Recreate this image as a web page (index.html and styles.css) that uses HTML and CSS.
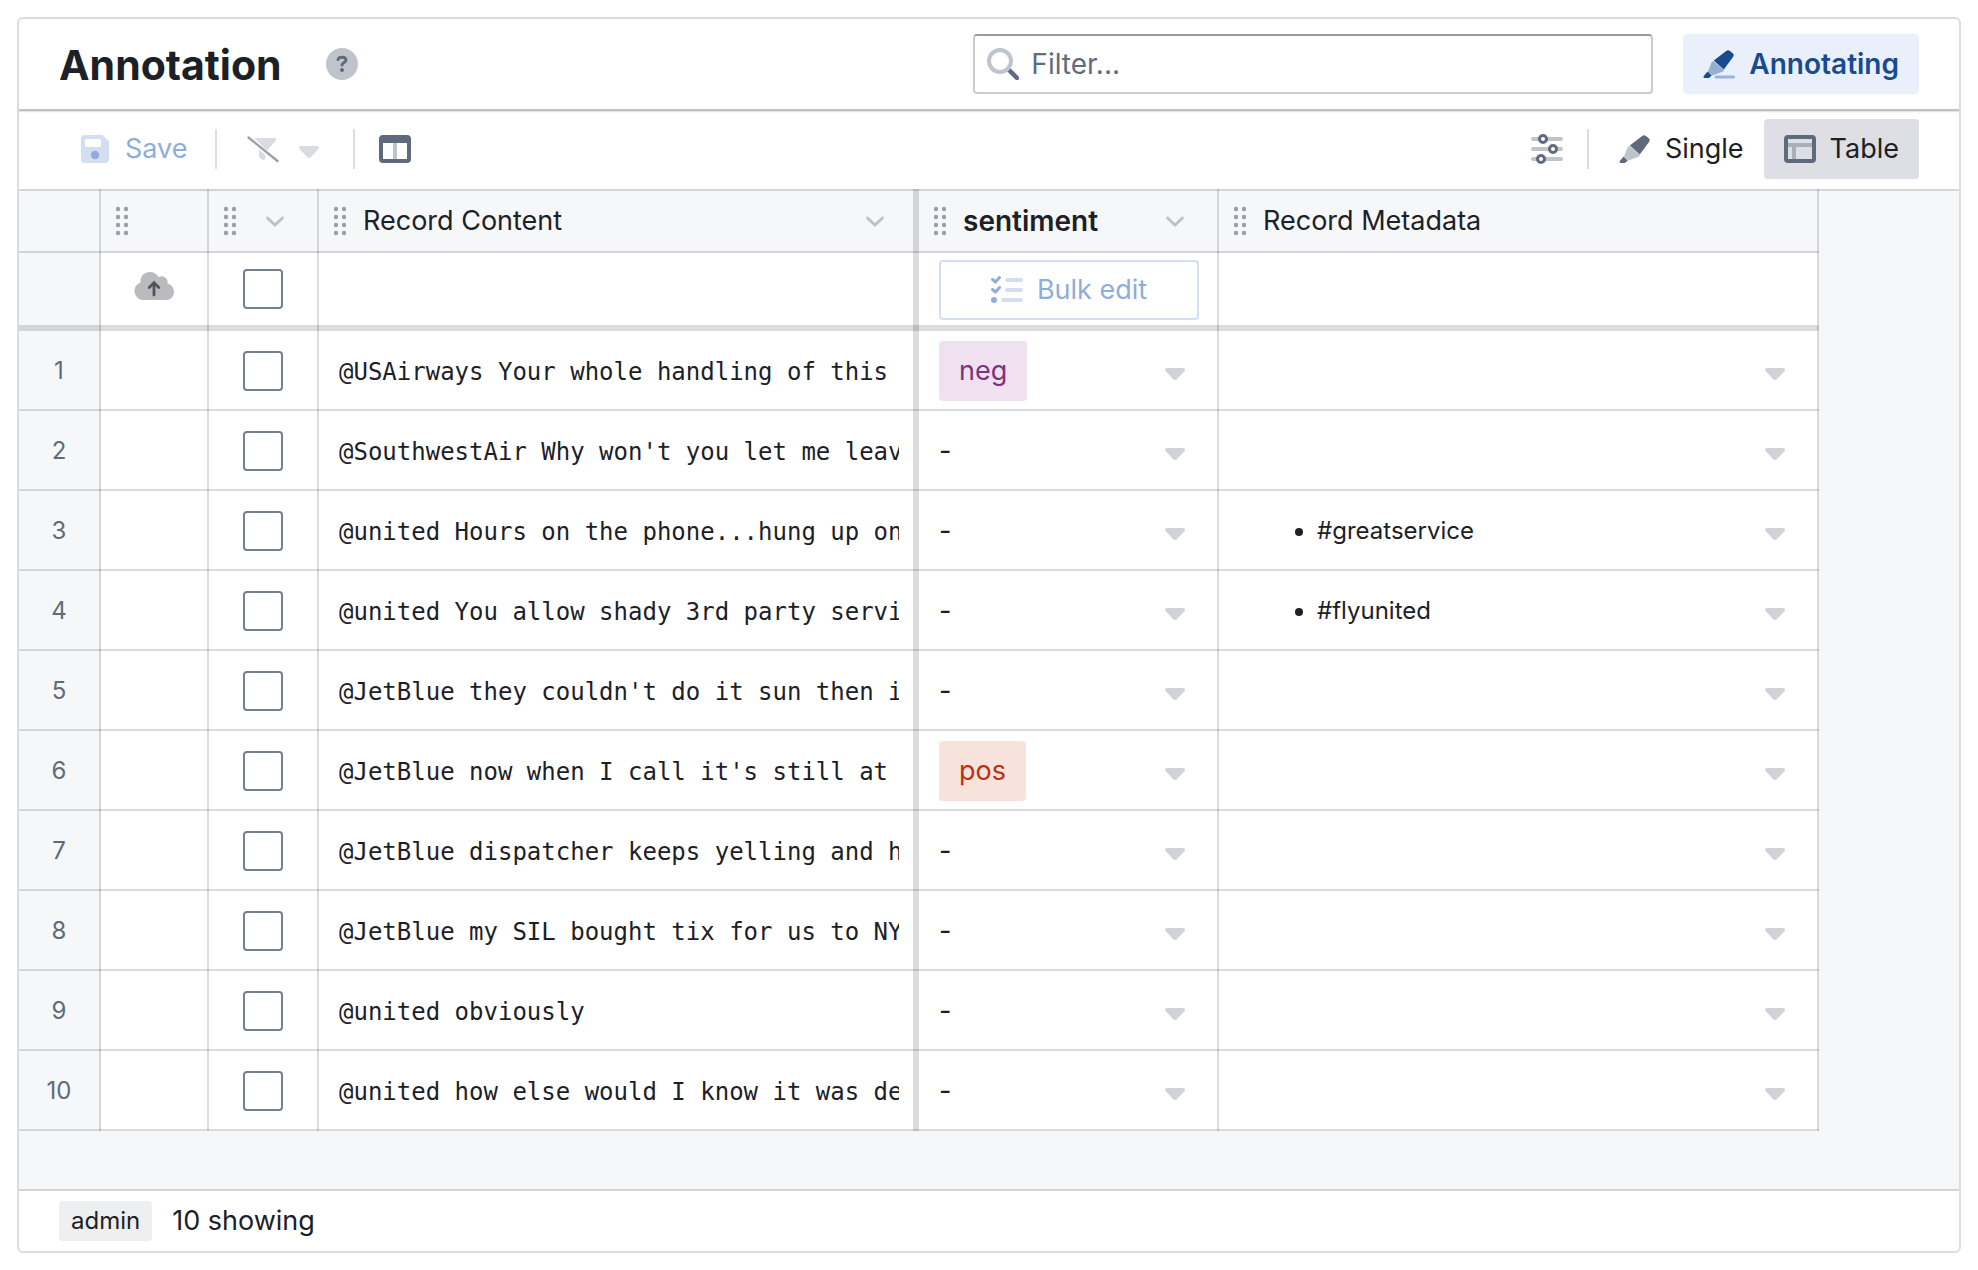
FILE: index.html
```html
<!DOCTYPE html>
<html lang="en">
<head>
<meta charset="utf-8">
<title>Annotation</title>
<meta name="viewport" content="width=device-width, initial-scale=1">
<link rel="stylesheet" href="styles.css">
</head>
<body>
<svg class="sprite" aria-hidden="true">
  <symbol id="i-help" viewBox="0 0 32 32">
    <circle cx="16" cy="16" r="16" fill="#bfc4cb"/>
    <path d="M12 11.500C13 8.200 20 8.400 20 12c0 2.800-4 2.600-4 5" fill="none" stroke="#5f6b7c" stroke-width="3" stroke-linecap="round"/>
    <circle cx="16" cy="22" r="2" fill="#5f6b7c"/>
  </symbol>
  <symbol id="i-search" viewBox="0 0 32 32">
    <path d="M21.500 21.500L30 30" stroke="#5f6b7c" stroke-width="4.500" stroke-linecap="round"/>
    <circle cx="13" cy="13" r="11" fill="none" stroke="#bfc5cc" stroke-width="4"/>
  </symbol>
  <symbol id="i-pen" viewBox="0 0 32 32">
    <path d="M5 23.500L8.500 14.500Q9 13.500 10.500 13L21 22Q20.500 23.500 19 24L9.500 27.500Z" fill="currentColor" opacity=".4"/>
    <path d="M10.800 12.600L23.500 2.800Q25.200 1.500 27 3L30 5.500Q31.500 7 30.200 8.800L20.800 21.600Z" fill="currentColor"/>
    <path d="M4.600 23.400L8.800 27.400L6.500 29.500Q6 30 5 30H1.500Q0 29.800.6 28.300Z" fill="currentColor"/>
  </symbol>
  <symbol id="i-save" viewBox="0 0 32 32">
    <path fill-rule="evenodd" d="M6 2H23.500L30 8.500V26a4 4 0 0 1-4 4H6a4 4 0 0 1-4-4V6a4 4 0 0 1 4-4ZM6 7.500V12.500a1.500 1.500 0 0 0 1.500 1.500H20.500a1.500 1.500 0 0 0 1.500-1.500V7.500A1.500 1.500 0 0 0 20.500 6H7.500A1.500 1.500 0 0 0 6 7.500Z" fill="#d3def0"/>
    <circle cx="16" cy="22" r="4.200" fill="#8fadda"/>
  </symbol>
  <symbol id="i-filter-off" viewBox="0 0 32 32">
    <path d="M7 5H27.500Q30 5.500 28.500 8L20 17.500Z" fill="#dadbe0"/>
    <path d="M12 16.500L18.500 22V25Q17.500 28 15 26.500L12 24Z" fill="#dadbe0"/>
    <path d="M1.500 4.500L30.500 28" stroke="#9ba1ad" stroke-width="2.400" stroke-linecap="round"/>
  </symbol>
  <symbol id="i-caret" viewBox="0 0 32 32">
    <path d="M8 13H24Q26 13 26 14.800Q26 15.700 25 16.600L18 24Q16 26 14 24L7 16.600Q6 15.700 6 14.800Q6 13 8 13Z" fill="currentColor"/>
  </symbol>
  <symbol id="i-columns" viewBox="0 0 32 32">
    <path fill-rule="evenodd" d="M4 2H28a4 4 0 0 1 4 4V26a4 4 0 0 1-4 4H4a4 4 0 0 1-4-4V6a4 4 0 0 1 4-4ZM4 10V26H28V10Z" fill="#5f6b7c"/>
    <path d="M14 10H18V26H14Z" fill="#bfc4cb"/>
  </symbol>
  <symbol id="i-sliders" viewBox="0 0 32 32">
    <path d="M2 6H30M2 16H30M2 26H30" stroke="#bfc4cb" stroke-width="4" stroke-linecap="round"/>
    <g fill="#fff" stroke="#5f6b7c" stroke-width="3"><circle cx="12" cy="6" r="3.500"/><circle cx="22" cy="16" r="3.500"/><circle cx="10" cy="26" r="3.500"/></g>
  </symbol>
  <symbol id="i-table" viewBox="0 0 32 32">
    <path d="M4 12H28M10 12V26" stroke="#a9b0ba" stroke-width="4" fill="none"/>
    <rect x="2" y="4" width="28" height="24" rx="2" fill="none" stroke="#5f6b7c" stroke-width="4"/>
  </symbol>
  <symbol id="i-drag" viewBox="0 0 12 32">
    <g fill="#98a0ad"><circle cx="2" cy="4" r="2.200"/><circle cx="10" cy="4" r="2.200"/><circle cx="2" cy="12" r="2.200"/><circle cx="10" cy="12" r="2.200"/><circle cx="2" cy="20" r="2.200"/><circle cx="10" cy="20" r="2.200"/><circle cx="2" cy="28" r="2.200"/><circle cx="10" cy="28" r="2.200"/></g>
  </symbol>
  <symbol id="i-chevron" viewBox="0 0 32 32">
    <path d="M8.500 13L16 20L23.500 13" fill="none" stroke="#bbc0c9" stroke-width="2.800" stroke-linecap="round"/>
  </symbol>
  <symbol id="i-cloud" viewBox="0 0 40 32">
    <path d="M9 30A9 9 0 0 1 6.500 12.500C6 6 10.500 2 16 2C20 2 23 4 24.500 7C29 4.500 34.500 8 33.500 13.500C37.500 14.500 40 18 40 21.500C40 26.500 36.500 30 32 30Z" fill="#babbbf"/>
    <path d="M20 25V13.500M15.200 17.500L20 12.800L24.800 17.500" fill="none" stroke="#50545a" stroke-width="2.800" stroke-linecap="round"/>
  </symbol>
  <symbol id="i-checks" viewBox="0 0 32 32">
    <path d="M16 6H30M16 16H30M12 26H30" stroke="#d3def0" stroke-width="4" stroke-linecap="round"/>
    <path d="M1.500 5.500L4.500 8L8.500 3.500M1.500 15.500L4.500 18L8.500 13.500" fill="none" stroke="#8fadda" stroke-width="3" stroke-linecap="round" stroke-linejoin="round"/>
    <circle cx="3" cy="26" r="3" fill="#8fadda"/>
  </symbol>
</svg>

<main class="panel">
  <header class="header">
    <h1 class="title">Annotation</h1>
    <button class="help" type="button" aria-label="Help"><svg class="icon"><use href="#i-help"/></svg></button>
    <label class="filter">
      <svg class="icon"><use href="#i-search"/></svg>
      <input class="filter-input" type="search" placeholder="Filter..." aria-label="Filter">
    </label>
    <button class="btn btn-primary" type="button">
      <svg class="icon" viewBox="0 0 32 32"><use href="#i-pen"/><path d="M13 29H30.500" stroke="#9cb3d8" stroke-width="3" stroke-linecap="round"/></svg>
      Annotating
    </button>
  </header>

  <div class="toolbar">
    <button class="btn btn-disabled" type="button" disabled><svg class="icon"><use href="#i-save"/></svg>Save</button>
    <span class="divider"></span>
    <button class="btn btn-menu" type="button" disabled aria-label="Clear filters"><svg class="icon"><use href="#i-filter-off"/></svg><svg class="icon"><use href="#i-caret"/></svg></button>
    <span class="divider"></span>
    <button class="btn btn-icon" type="button" aria-label="Columns"><svg class="icon"><use href="#i-columns"/></svg></button>
    <span class="spacer"></span>
    <button class="btn btn-icon" type="button" aria-label="Settings"><svg class="icon"><use href="#i-sliders"/></svg></button>
    <span class="divider"></span>
    <button class="btn" type="button"><svg class="icon pen-gray"><use href="#i-pen"/></svg>Single</button>
    <button class="btn btn-active" type="button" aria-pressed="true"><svg class="icon"><use href="#i-table"/></svg>Table</button>
  </div>

  <div class="sheet">
    <table class="grid">
      <colgroup><col class="c-num"><col class="c-sync"><col class="c-check"><col class="c-content"><col class="c-label"><col class="c-meta"></colgroup>
      <thead>
        <tr class="head">
          <th></th>
          <th><div class="th"><svg class="drag"><use href="#i-drag"/></svg></div></th>
          <th><div class="th"><svg class="drag"><use href="#i-drag"/></svg><svg class="icon end"><use href="#i-chevron"/></svg></div></th>
          <th class="thick"><div class="th"><svg class="drag"><use href="#i-drag"/></svg>Record Content<svg class="icon end"><use href="#i-chevron"/></svg></div></th>
          <th><div class="th"><svg class="drag"><use href="#i-drag"/></svg><b>sentiment</b><svg class="icon end"><use href="#i-chevron"/></svg></div></th>
          <th><div class="th"><svg class="drag"><use href="#i-drag"/></svg>Record Metadata</div></th>
        </tr>
        <tr class="bulk">
          <td class="num"></td>
          <td><div class="center"><svg class="cloud"><use href="#i-cloud"/></svg></div></td>
          <td><div class="center"><input class="check" type="checkbox" aria-label="Select all"></div></td>
          <td class="thick"></td>
          <td><div class="cell"><button class="btn btn-outline" type="button" disabled><svg class="icon"><use href="#i-checks"/></svg>Bulk edit</button></div></td>
          <td></td>
        </tr>
      </thead>
      <tbody id="rows"></tbody>
    </table>
  </div>

  <footer class="footer"><span class="role">admin</span><span>10 showing</span></footer>
</main>
<script src="rows.js"></script>
</body>
</html>
```
FILE: rows.js
```js
const records = [
  { text: "@USAirways Your whole handling of this", label: "neg" },
  { text: "@SouthwestAir Why won't you let me leav" },
  { text: "@united Hours on the phone...hung up on", meta: "#greatservice" },
  { text: "@united You allow shady 3rd party servi", meta: "#flyunited" },
  { text: "@JetBlue they couldn't do it sun then i" },
  { text: "@JetBlue now when I call it's still at", label: "pos" },
  { text: "@JetBlue dispatcher keeps yelling and h" },
  { text: "@JetBlue my SIL bought tix for us to NY" },
  { text: "@united obviously" },
  { text: "@united how else would I know it was de" }
];

const caret = (name) =>
  `<button class="caret" type="button" aria-label="${name}"><svg class="icon"><use href="#i-caret"/></svg></button>`;

document.getElementById("rows").innerHTML = records.map((r, i) => `
  <tr>
    <td class="num">${i + 1}</td>
    <td></td>
    <td><div class="center"><input class="check" type="checkbox" aria-label="Select record ${i + 1}"></div></td>
    <td class="thick"><div class="record">${r.text}</div></td>
    <td><div class="cell">${r.label ? `<span class="tag tag-${r.label}">${r.label}</span>` : "<span>-</span>"}${caret("Edit label")}</div></td>
    <td><div class="cell">${r.meta ? `<ul class="meta"><li>${r.meta}</li></ul>` : ""}${caret("Edit metadata")}</div></td>
  </tr>`).join("");
```
FILE: styles.css
```css
:root {
  --line: rgba(17, 20, 24, .15);
  --ink: #1c2127;
  --muted: #5f6b7c;
  --sheet: #f6f7f9;
}

* { box-sizing: border-box; }

body {
  margin: 0;
  padding: 17px;
  min-height: 100vh;
  display: flex;
  background: #fff;
  color: var(--ink);
  font-family: Inter, "Liberation Sans", sans-serif;
  font-size: 27px;
  line-height: 36px;
}

.sprite { display: none; }

.icon { width: 32px; height: 32px; flex: none; display: block; }

.panel {
  flex: 1;
  min-width: 0;
  display: flex;
  flex-direction: column;
  border: 2px solid #dbdcdd;
  border-radius: 6px;
  overflow: hidden;
}

.header {
  display: flex;
  align-items: center;
  padding: 15px 40px;
  border-bottom: 2px solid #c1c2c4;
  box-shadow: 0 1px 1px rgba(17, 20, 24, .12);
}

.title { margin: 0; padding-top: 2px; font-size: 41px; line-height: 58px; font-weight: 700; }

.help { margin: 0 auto 0 44px; padding: 0; border: 0; background: none; }

.filter {
  display: flex;
  align-items: center;
  gap: 12px;
  width: 680px;
  height: 60px;
  margin-right: 30px;
  padding: 0 12px;
  border: 2px solid #cbccce;
  border-top-color: #9b9c9f;
  border-radius: 4px;
  font-size: 28px;
}

.filter-input {
  flex: 1;
  min-width: 0;
  padding: 0;
  border: 0;
  outline: 0;
  background: none;
  color: var(--ink);
  font: inherit;
}
.filter-input::placeholder { color: var(--muted); opacity: 1; }

.btn {
  display: flex;
  align-items: center;
  justify-content: center;
  gap: 14px;
  height: 60px;
  padding: 0 20px;
  border: 0;
  border-radius: 4px;
  background: none;
  color: var(--ink);
  font: inherit;
  white-space: nowrap;
}
.btn-primary { background: #eaf0fb; color: #184a90; font-size: 28px; font-weight: 600; }
.btn-disabled { padding-right: 18px; color: #8fadda; }
.btn-menu { padding-right: 18px; color: #dadbe0; }
.btn-icon { padding: 0 14px; }
.btn-active { background: #dddfe4; }
.btn-outline { flex: 1; border: 2px solid #d3def0; color: #8fadda; }
.pen-gray { color: var(--muted); }

.toolbar { display: flex; align-items: center; padding: 8px 40px 10px; }
.divider { width: 2px; height: 40px; margin: 0 10px; background: #dbdcdd; }
.spacer { flex: 1; }

.sheet {
  flex: 1;
  background: var(--sheet);
  box-shadow: inset 0 2px 0 var(--line), inset 0 -2px 0 var(--line);
}

.grid { width: 1800px; border-spacing: 0; table-layout: fixed; }
.c-num { width: 82px; }
.c-sync { width: 108px; }
.c-check { width: 110px; }
.c-content { width: 600px; }
.c-label { width: 300px; }
.c-meta { width: 600px; }

.grid th, .grid td {
  height: 80px;
  padding: 2px 2px 2px 0;
  background: #fff;
  box-shadow: inset -2px 0 0 var(--line), inset 0 -2px 0 var(--line);
}
.grid .thick { box-shadow: inset -6px 0 0 var(--line), inset 0 -2px 0 var(--line); }
.grid .head th {
  height: 64px;
  background: none;
  font-weight: 400;
}
.grid .bulk td {
  height: 78px;
  padding: 0 2px 6px 0;
  box-shadow: inset -2px 0 0 var(--line), inset 0 -6px 0 var(--line);
}
.grid .bulk .thick { box-shadow: inset -6px 0 0 var(--line), inset 0 -6px 0 var(--line); }
.grid .num { background: var(--sheet); color: var(--muted); font-size: 24px; text-align: center; }

.th { display: flex; align-items: center; gap: 17px; padding: 0 26px 0 15px; }
.th b { font-size: 28px; font-weight: 600; }
.drag { width: 12px; height: 32px; flex: none; }
.end { margin-left: auto; }

.center { display: flex; align-items: center; justify-content: center; }
.cloud { width: 40px; height: 32px; margin-bottom: 6px; }

.check {
  appearance: none;
  width: 40px;
  height: 40px;
  margin: 0;
  border: 2px solid #738091;
  border-radius: 4px;
  background: #fff;
}

.cell { display: flex; align-items: center; padding: 0 18px 0 20px; }
.bulk .cell { padding-top: 2px; }

.record {
  margin: 0 18px 0 20px;
  padding-top: 2px;
  overflow: hidden;
  white-space: nowrap;
  font-family: "DejaVu Sans Mono", "Liberation Mono", monospace;
  font-size: 24px;
}

.caret {
  margin: 0 8px 0 auto;
  padding: 0;
  border: 0;
  background: none;
  color: #cfd2d7;
}

.tag { padding: 12px 20px; border-radius: 4px; }
.tag-neg { background: #f0e1f0; color: #7c327c; }
.tag-pos { background: #f8e2dc; color: #b83211; }

.meta { margin: 0; padding-left: 78px; font-size: 24px; }

.footer { display: flex; align-items: center; gap: 20px; padding: 10px 40px; }
.role { padding: 2px 12px; border-radius: 4px; background: #eeeff1; font-size: 24px; }
```
